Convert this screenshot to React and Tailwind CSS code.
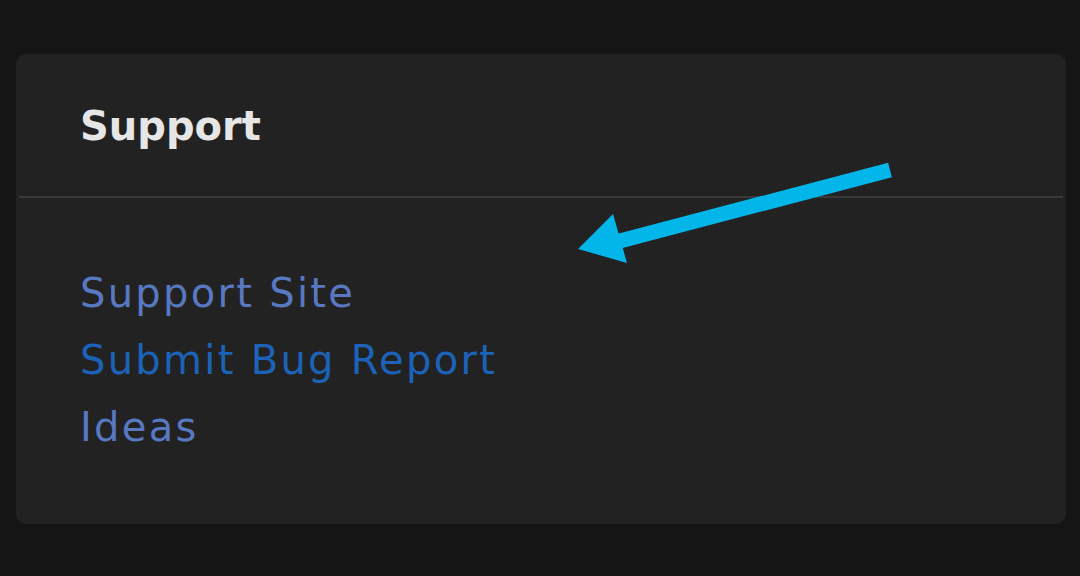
export default function App() {
  const links = [
    { label: "Support Site", color: "text-[#5878c2]" },
    { label: "Submit Bug Report", color: "text-[#1c62b8]" },
    { label: "Ideas", color: "text-[#5878c2]" },
  ];

  return (
    <div className="w-[1080px] h-[576px] bg-[#151515] pt-[54px] pl-[16px] font-['DejaVu_Sans','Noto_Sans',sans-serif]">
      <div className="relative w-[1050px] h-[470px] bg-[#222222] rounded-[10px]">
        <div className="h-[142px] pl-[64px] flex items-center">
          <h2 className="text-[40px] font-bold text-[#e6e6e6] pt-[2px]">Support</h2>
        </div>
        <div className="h-[2px] mx-[3px] bg-[#393939]" />
        <ul className="pl-[64px] pt-[62px] flex flex-col">
          {links.map((link) => (
            <li key={link.label} className={`text-[40px] leading-[67px] tracking-[2.3px] ${link.color}`}>
              <a href="#">{link.label}</a>
            </li>
          ))}
        </ul>

        {/* annotation arrow */}
        <svg className="absolute left-0 top-0 pointer-events-none" width="1050" height="470" viewBox="0 0 1050 470">
          <line x1="874" y1="116" x2="600" y2="188" stroke="#03b6ea" strokeWidth="15" />
          <polygon points="562,195 597,160 611,209" fill="#03b6ea" />
        </svg>
      </div>
    </div>
  );
}
